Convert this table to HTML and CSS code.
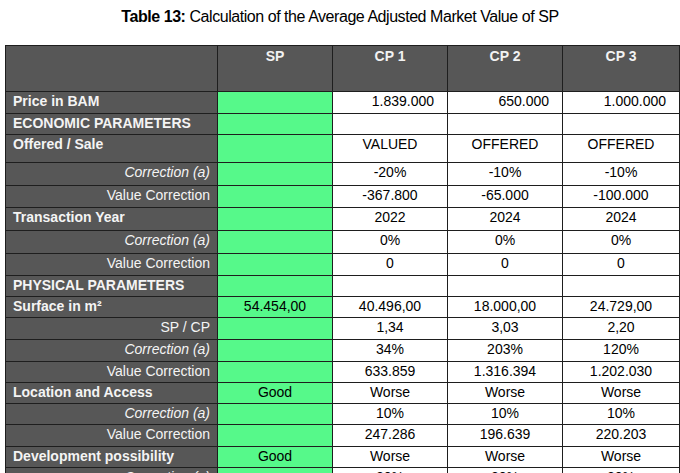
FILE: index.html
```html
<!DOCTYPE html>
<html>
<head>
<meta charset="utf-8">
<link rel="stylesheet" href="styles.css">
</head>
<body>
<h1 class="title"><b>Table 13:</b> Calculation of the Average Adjusted Market Value of SP</h1>
<table class="grid">
<colgroup>
<col class="c-label"><col class="c-sp"><col class="c-cp"><col class="c-cp"><col class="c-cp3">
</colgroup>
<thead>
<tr class="h-head"><th class="corner"></th><th>SP</th><th>CP 1</th><th>CP 2</th><th>CP 3</th></tr>
</thead>
<tbody>
<tr class="h22"><td class="lab b">Price in BAM</td><td class="sp"></td><td class="num">1.839.000</td><td class="num">650.000</td><td class="num">1.000.000</td></tr>
<tr class="h21"><td class="lab b">ECONOMIC PARAMETERS</td><td class="sp"></td><td></td><td></td><td></td></tr>
<tr class="h28"><td class="lab b">Offered / Sale</td><td class="sp"></td><td>VALUED</td><td>OFFERED</td><td>OFFERED</td></tr>
<tr class="h23"><td class="lab r i">Correction (a)</td><td class="sp"></td><td>-20%</td><td>-10%</td><td>-10%</td></tr>
<tr class="h22"><td class="lab r">Value Correction</td><td class="sp"></td><td>-367.800</td><td>-65.000</td><td>-100.000</td></tr>
<tr class="h23"><td class="lab b">Transaction Year</td><td class="sp"></td><td>2022</td><td>2024</td><td>2024</td></tr>
<tr class="h23"><td class="lab r i">Correction (a)</td><td class="sp"></td><td>0%</td><td>0%</td><td>0%</td></tr>
<tr class="h22"><td class="lab r">Value Correction</td><td class="sp"></td><td>0</td><td>0</td><td>0</td></tr>
<tr class="h21"><td class="lab b">PHYSICAL PARAMETERS</td><td class="sp"></td><td></td><td></td><td></td></tr>
<tr class="h21"><td class="lab b">Surface in m²</td><td class="sp">54.454,00</td><td>40.496,00</td><td>18.000,00</td><td>24.729,00</td></tr>
<tr class="h22"><td class="lab r">SP / CP</td><td class="sp"></td><td>1,34</td><td>3,03</td><td>2,20</td></tr>
<tr class="h22"><td class="lab r i">Correction (a)</td><td class="sp"></td><td>34%</td><td>203%</td><td>120%</td></tr>
<tr class="h21"><td class="lab r">Value Correction</td><td class="sp"></td><td>633.859</td><td>1.316.394</td><td>1.202.030</td></tr>
<tr class="h21"><td class="lab b">Location and Access</td><td class="sp">Good</td><td>Worse</td><td>Worse</td><td>Worse</td></tr>
<tr class="h21"><td class="lab r i">Correction (a)</td><td class="sp"></td><td>10%</td><td>10%</td><td>10%</td></tr>
<tr class="h22"><td class="lab r">Value Correction</td><td class="sp"></td><td>247.286</td><td>196.639</td><td>220.203</td></tr>
<tr class="h21"><td class="lab b">Development possibility</td><td class="sp">Good</td><td>Worse</td><td>Worse</td><td>Worse</td></tr>
<tr class="h21"><td class="lab r i">Correction (a)</td><td class="sp"></td><td>20%</td><td>20%</td><td>20%</td></tr>
</tbody>
</table>
</body>
</html>
```
FILE: styles.css
```css
html, body {
  margin: 0;
  padding: 0;
  overflow: hidden;
  background: #ffffff;
  font-family: "Liberation Sans", Arial, sans-serif;
}

.title {
  margin: 0;
  padding-top: 7px;
  height: 45px;
  box-sizing: border-box;
  text-align: center;
  font-size: 16px;
  letter-spacing: -0.45px;
  line-height: 20px;
  font-weight: normal;
  color: #000;
}

.title b {
  font-weight: bold;
}

.grid {
  margin-left: 5px;
  border-collapse: collapse;
  table-layout: fixed;
  width: 674px;
  font-size: 14px;
  line-height: 16px;
  color: #000;
}

.c-label { width: 212px; }
.c-sp { width: 115px; }
.c-cp { width: 115px; }
.c-cp3 { width: 117px; }

.grid th,
.grid td {
  border: 1px solid #1e1e1e;
  padding: 1px 6px 0;
  vertical-align: top;
  text-align: center;
  white-space: nowrap;
  overflow: hidden;
}

.grid th {
  background: #575757;
  color: #f2f2f2;
  font-weight: bold;
  padding-top: 2px;
}

.h-head { height: 46px; }
.h21 { height: 21px; }
.h22 { height: 22px; }
.h23 { height: 23px; }
.h28 { height: 28px; }

.grid td.lab {
  background: #575757;
  color: #f4f4f4;
  text-align: left;
  padding-left: 7px;
}

.grid td.lab.r {
  text-align: right;
  padding-right: 7px;
}

.b { font-weight: bold; }
.i { font-style: italic; }

.grid td.sp {
  background: #56f98a;
}

.grid td.num {
  text-align: right;
  padding-right: 13px;
}
```
